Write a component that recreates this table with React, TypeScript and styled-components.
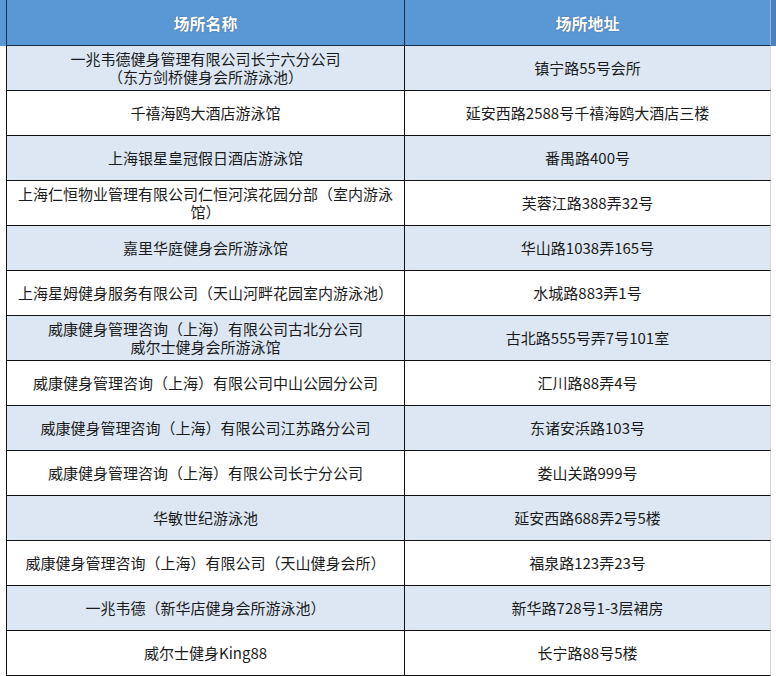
import React from "react";
import styled, { createGlobalStyle } from "styled-components";

const Global = createGlobalStyle`
  html, body { margin: 0; padding: 0; background: #ffffff; }
  body { font-family: "Noto Sans CJK SC", "Noto Sans", sans-serif; }
`;

const Table = styled.div`
  width: 776px;
  display: flex;
  flex-direction: column;
`;

const Row = styled.div<{ $header?: boolean; $shade?: boolean }>`
  display: grid;
  grid-template-columns: 6px 399px 366px 5px;
  height: ${(p) => (p.$header ? "46px" : "45px")};
  background: ${(p) => (p.$header ? "#5a97d5" : "#ffffff")};
`;

const Stub = styled.div<{ $header?: boolean; $right?: boolean }>`
  background: ${(p) =>
    p.$header ? (p.$right ? "#4b80bd" : "#5a97d5") : "#ffffff"};
`;

const Cell = styled.div<{
  $header?: boolean;
  $shade?: boolean;
  $first?: boolean;
}>`
  box-sizing: border-box;
  display: flex;
  align-items: center;
  justify-content: center;
  text-align: center;
  padding: 0 6px;
  background: ${(p) =>
    p.$header ? "#5a97d5" : p.$shade ? "#dce7f3" : "#ffffff"};
  border-bottom: 1px solid ${(p) => (p.$header ? "#1c2f4a" : "#111111")};
  border-left: ${(p) =>
    p.$first ? `1px solid ${p.$header ? "#1c2f4a" : "#111111"}` : "none"};
  border-right: 1px solid
    ${(p) =>
      p.$first
        ? p.$header
          ? "#1c2f4a"
          : "#111111"
        : p.$header
        ? "#8fb6e2"
        : "#d6d6d6"};
  color: ${(p) => (p.$header ? "#ffffff" : "#1b1b1b")};
  font-size: ${(p) => (p.$header ? "16px" : "15px")};
  font-weight: ${(p) => (p.$header ? 700 : 400)};
  line-height: 18px;
  text-shadow: ${(p) =>
    p.$header ? "0 0 1px rgba(20,40,70,0.7)" : "none"};
  letter-spacing: 0;
`;

type Item = { name: React.ReactNode; addr: string };

const rows: Item[] = [
  {
    name: (
      <>
        一兆韦德健身管理有限公司长宁六分公司
        <br />
        （东方剑桥健身会所游泳池）
      </>
    ),
    addr: "镇宁路55号会所",
  },
  { name: "千禧海鸥大酒店游泳馆", addr: "延安西路2588号千禧海鸥大酒店三楼" },
  { name: "上海银星皇冠假日酒店游泳馆", addr: "番禺路400号" },
  {
    name: "上海仁恒物业管理有限公司仁恒河滨花园分部（室内游泳馆）",
    addr: "芙蓉江路388弄32号",
  },
  { name: "嘉里华庭健身会所游泳馆", addr: "华山路1038弄165号" },
  {
    name: "上海星姆健身服务有限公司（天山河畔花园室内游泳池）",
    addr: "水城路883弄1号",
  },
  {
    name: (
      <>
        威康健身管理咨询（上海）有限公司古北分公司
        <br />
        威尔士健身会所游泳馆
      </>
    ),
    addr: "古北路555号弄7号101室",
  },
  {
    name: "威康健身管理咨询（上海）有限公司中山公园分公司",
    addr: "汇川路88弄4号",
  },
  {
    name: "威康健身管理咨询（上海）有限公司江苏路分公司",
    addr: "东诸安浜路103号",
  },
  {
    name: "威康健身管理咨询（上海）有限公司长宁分公司",
    addr: "娄山关路999号",
  },
  { name: "华敏世纪游泳池", addr: "延安西路688弄2号5楼" },
  {
    name: "威康健身管理咨询（上海）有限公司（天山健身会所）",
    addr: "福泉路123弄23号",
  },
  { name: "一兆韦德（新华店健身会所游泳池）", addr: "新华路728号1-3层裙房" },
  { name: "威尔士健身King88", addr: "长宁路88号5楼" },
];

export default function App() {
  return (
    <>
      <Global />
      <Table>
        <Row $header>
          <Stub $header />
          <Cell $header $first>
            场所名称
          </Cell>
          <Cell $header>场所地址</Cell>
          <Stub $header $right />
        </Row>
        {rows.map((r, i) => {
          const shade = i % 2 === 0;
          return (
            <Row key={i}>
              <Stub />
              <Cell $first $shade={shade}>
                <span>{r.name}</span>
              </Cell>
              <Cell $shade={shade}>
                <span>{r.addr}</span>
              </Cell>
              <Stub />
            </Row>
          );
        })}
      </Table>
    </>
  );
}
